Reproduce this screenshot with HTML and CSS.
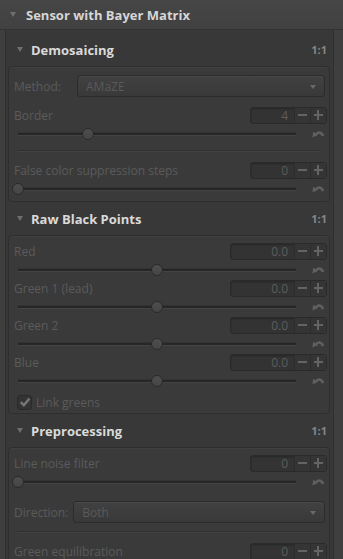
FILE: index.html
```html
<!DOCTYPE html>
<html lang="en">
<head>
    <meta charset="UTF-8">
    <meta name="viewport" content="width=device-width, initial-scale=1.0">
    <title>Sensor with Bayer Matrix</title>
    <link rel="stylesheet" href="styles.css">
</head>
<body>
    <div class="tool">
        <div class="tool-head">
            <span class="tri"></span>
            <span class="tool-title">Sensor with Bayer Matrix</span>
        </div>

        <div class="tool-body">
            <!-- Demosaicing -->
            <div class="sec-head">
                <span class="tri"></span>
                <span class="sec-title">Demosaicing</span>
                <span class="zoom">1:1</span>
            </div>
            <div class="box">
                <div class="combo-row first">
                    <span class="lbl lbl-method">Method:</span>
                    <div class="combo">AMaZE<span class="arrow"></span></div>
                </div>
                <div class="param gap">
                    <div class="param-top">
                        <span class="lbl">Border</span>
                        <div class="spin"><span class="val">4</span><span class="btn minus"></span><span class="btn plus"></span></div>
                    </div>
                    <div class="slider-row">
                        <div class="track"><span class="knob" style="left: 25%"></span></div>
                        <div class="reset"><svg width="12" height="10" viewBox="0 0 12 10"><path d="M4 5.6 C5.6 2.6 9.4 2.6 11 7" stroke="#606060" stroke-width="2.5" fill="none"/><path d="M0.4 8.6 L1.2 2.8 L6 6 Z" fill="#606060"/></svg></div>
                    </div>
                </div>
                <div class="sep"></div>
                <div class="param">
                    <div class="param-top">
                        <span class="lbl">False color suppression steps</span>
                        <div class="spin"><span class="val">0</span><span class="btn minus"></span><span class="btn plus"></span></div>
                    </div>
                    <div class="slider-row">
                        <div class="track"><span class="knob" style="left: 0%"></span></div>
                        <div class="reset"><svg width="12" height="10" viewBox="0 0 12 10"><path d="M4 5.6 C5.6 2.6 9.4 2.6 11 7" stroke="#606060" stroke-width="2.5" fill="none"/><path d="M0.4 8.6 L1.2 2.8 L6 6 Z" fill="#606060"/></svg></div>
                    </div>
                </div>
            </div>

            <!-- Raw Black Points -->
            <div class="sec-head">
                <span class="tri"></span>
                <span class="sec-title">Raw Black Points</span>
                <span class="zoom">1:1</span>
            </div>
            <div class="box">
                <div class="param">
                    <div class="param-top">
                        <span class="lbl">Red</span>
                        <div class="spin wide"><span class="val">0.0</span><span class="btn minus"></span><span class="btn plus"></span></div>
                    </div>
                    <div class="slider-row">
                        <div class="track"><span class="knob" style="left: 50%"></span></div>
                        <div class="reset"><svg width="12" height="10" viewBox="0 0 12 10"><path d="M4 5.6 C5.6 2.6 9.4 2.6 11 7" stroke="#606060" stroke-width="2.5" fill="none"/><path d="M0.4 8.6 L1.2 2.8 L6 6 Z" fill="#606060"/></svg></div>
                    </div>
                </div>
                <div class="param stack">
                    <div class="param-top">
                        <span class="lbl">Green 1 (lead)</span>
                        <div class="spin wide"><span class="val">0.0</span><span class="btn minus"></span><span class="btn plus"></span></div>
                    </div>
                    <div class="slider-row">
                        <div class="track"><span class="knob" style="left: 50%"></span></div>
                        <div class="reset"><svg width="12" height="10" viewBox="0 0 12 10"><path d="M4 5.6 C5.6 2.6 9.4 2.6 11 7" stroke="#606060" stroke-width="2.5" fill="none"/><path d="M0.4 8.6 L1.2 2.8 L6 6 Z" fill="#606060"/></svg></div>
                    </div>
                </div>
                <div class="param stack">
                    <div class="param-top">
                        <span class="lbl">Green 2</span>
                        <div class="spin wide"><span class="val">0.0</span><span class="btn minus"></span><span class="btn plus"></span></div>
                    </div>
                    <div class="slider-row">
                        <div class="track"><span class="knob" style="left: 50%"></span></div>
                        <div class="reset"><svg width="12" height="10" viewBox="0 0 12 10"><path d="M4 5.6 C5.6 2.6 9.4 2.6 11 7" stroke="#606060" stroke-width="2.5" fill="none"/><path d="M0.4 8.6 L1.2 2.8 L6 6 Z" fill="#606060"/></svg></div>
                    </div>
                </div>
                <div class="param stack">
                    <div class="param-top">
                        <span class="lbl">Blue</span>
                        <div class="spin wide"><span class="val">0.0</span><span class="btn minus"></span><span class="btn plus"></span></div>
                    </div>
                    <div class="slider-row">
                        <div class="track"><span class="knob" style="left: 50%"></span></div>
                        <div class="reset"><svg width="12" height="10" viewBox="0 0 12 10"><path d="M4 5.6 C5.6 2.6 9.4 2.6 11 7" stroke="#606060" stroke-width="2.5" fill="none"/><path d="M0.4 8.6 L1.2 2.8 L6 6 Z" fill="#606060"/></svg></div>
                    </div>
                </div>
                <label class="check-row">
                    <span class="check"><svg width="12" height="12" viewBox="0 0 12 12"><path d="M1.8 6.2 L4.8 9.2 L10.4 2.6" stroke="#767676" stroke-width="2.4" fill="none"/></svg></span>
                    <span class="lbl">Link greens</span>
                </label>
            </div>

            <!-- Preprocessing -->
            <div class="sec-head">
                <span class="tri"></span>
                <span class="sec-title">Preprocessing</span>
                <span class="zoom">1:1</span>
            </div>
            <div class="box">
                <div class="param">
                    <div class="param-top">
                        <span class="lbl">Line noise filter</span>
                        <div class="spin"><span class="val">0</span><span class="btn minus"></span><span class="btn plus"></span></div>
                    </div>
                    <div class="slider-row">
                        <div class="track"><span class="knob" style="left: 0%"></span></div>
                        <div class="reset"><svg width="12" height="10" viewBox="0 0 12 10"><path d="M4 5.6 C5.6 2.6 9.4 2.6 11 7" stroke="#606060" stroke-width="2.5" fill="none"/><path d="M0.4 8.6 L1.2 2.8 L6 6 Z" fill="#606060"/></svg></div>
                    </div>
                </div>
                <div class="combo-row gap">
                    <span class="lbl">Direction:</span>
                    <div class="combo">Both<span class="arrow"></span></div>
                </div>
                <div class="sep"></div>
                <div class="param">
                    <div class="param-top">
                        <span class="lbl">Green equilibration</span>
                        <div class="spin"><span class="val">0</span><span class="btn minus"></span><span class="btn plus"></span></div>
                    </div>
                </div>
            </div>
        </div>
    </div>
</body>
</html>
```

FILE: styles.css
```css
* {
    margin: 0;
    padding: 0;
    box-sizing: border-box;
}

body {
    width: 343px;
    height: 559px;
    overflow: hidden;
    background: #3f3f3f;
    font-family: 'Open Sans', 'DejaVu Sans', sans-serif;
    font-size: 12px;
    color: #5b5b5b;
}

.tri {
    width: 0;
    height: 0;
    border-left: 3.5px solid transparent;
    border-right: 3.5px solid transparent;
    border-top: 5px solid #6e6e6e;
    flex: none;
}

/* tool frame header */
.tool-head {
    height: 30px;
    display: flex;
    align-items: center;
    padding-left: 10px;
    background: linear-gradient(#464646, #414141);
    border-bottom: 1px solid #333;
}

.tool-head .tri {
    margin-right: 10px;
}

.tool-title {
    font-weight: 700;
    font-size: 13px;
    color: #d6d6d6;
}

.tool-body {
    width: 329px;
    margin-left: 5px;
    padding-top: 3px;
    background: #383838;
    border-left: 1px solid #2f2f2f;
    border-right: 1px solid #2f2f2f;
    min-height: 529px;
}

/* sub tool header */
.sec-head {
    height: 33px;
    display: flex;
    align-items: center;
    padding: 0 6px 0 11px;
}

.sec-head .tri {
    margin-right: 8px;
}

.sec-title {
    font-weight: 700;
    font-size: 13px;
    color: #dadada;
    flex: 1;
}

.zoom {
    font-weight: 700;
    font-size: 11px;
    color: #858585;
}

.box {
    margin: 0 3px 0 2px;
    padding: 7px 2px 4px 5px;
    background: #3a3a3a;
    border: 1px solid #2e2e2e;
    border-radius: 4px;
    box-shadow: inset 0 1px 0 rgba(255, 255, 255, 0.03);
}

.lbl {
    color: #5b5b5b;
    white-space: nowrap;
}

/* combo boxes */
.combo-row {
    display: flex;
    align-items: center;
    gap: 5px;
}

.combo-row.first {
    margin-top: 1px;
}

.combo-row.gap {
    margin-top: 11px;
}

.lbl-method {
    width: 58px;
}

.combo {
    flex: 1;
    height: 22px;
    margin-right: 2px;
    display: flex;
    align-items: center;
    padding-left: 8px;
    color: #5a5a5a;
    background: linear-gradient(#414141, #393939);
    border: 1px solid #2b2b2b;
    border-radius: 3px;
    box-shadow: inset 0 1px 0 rgba(255, 255, 255, 0.04);
    position: relative;
}

.combo .arrow {
    position: absolute;
    right: 8px;
    top: 9px;
    width: 0;
    height: 0;
    border-left: 3.5px solid transparent;
    border-right: 3.5px solid transparent;
    border-top: 4px solid #6a6a6a;
}

/* spin button + slider */
.param.gap {
    margin-top: 10px;
}

.param.stack {
    margin-top: 2px;
}

.param-top {
    height: 17px;
    display: flex;
    align-items: center;
    justify-content: space-between;
}

.spin {
    width: 77px;
    height: 17px;
    display: flex;
    background: #333;
    border: 1px solid #2a2a2a;
    border-radius: 3px;
    box-shadow: inset 0 1px 2px rgba(0, 0, 0, 0.25);
}

.spin.wide {
    width: 97px;
}

.val {
    flex: 1;
    text-align: right;
    padding-right: 6px;
    line-height: 15px;
    color: #5c5c5c;
}

.btn {
    width: 16px;
    border-left: 1px solid #2c2c2c;
    position: relative;
    background: #353535;
}

.btn::before,
.btn::after {
    content: '';
    position: absolute;
    background: #646464;
}

.btn::before {
    left: 3px;
    right: 3px;
    top: 6px;
    height: 2px;
}

.plus::after {
    top: 2px;
    bottom: 3px;
    left: 6px;
    width: 2px;
}

.slider-row {
    height: 18px;
    display: flex;
    align-items: center;
    padding-top: 1px;
}

.track {
    flex: 1;
    height: 2px;
    margin-left: 4px;
    background: #262626;
    box-shadow: 0 1px 0 #444, 0 -1px 0 #333;
    position: relative;
}

.knob {
    position: absolute;
    top: 50%;
    width: 12px;
    height: 12px;
    border-radius: 50%;
    transform: translate(-50%, -50%);
    background: linear-gradient(#4e4e4e, #454545);
    border: 1px solid #2a2a2a;
}

.reset {
    width: 31px;
    display: flex;
    justify-content: flex-end;
    padding-right: 3px;
}

.sep {
    height: 2px;
    margin: 8px 6px 10px 4px;
    border-top: 1px solid #2f2f2f;
    border-bottom: 1px solid #424242;
}

/* checkbox */
.check-row {
    display: flex;
    align-items: center;
    gap: 4px;
    margin-top: 6px;
    margin-left: 3px;
    height: 14px;
}

.check {
    width: 15px;
    height: 15px;
    display: flex;
    align-items: center;
    justify-content: center;
    background: #333;
    border: 1px solid #2a2a2a;
    border-radius: 3px;
}
```
